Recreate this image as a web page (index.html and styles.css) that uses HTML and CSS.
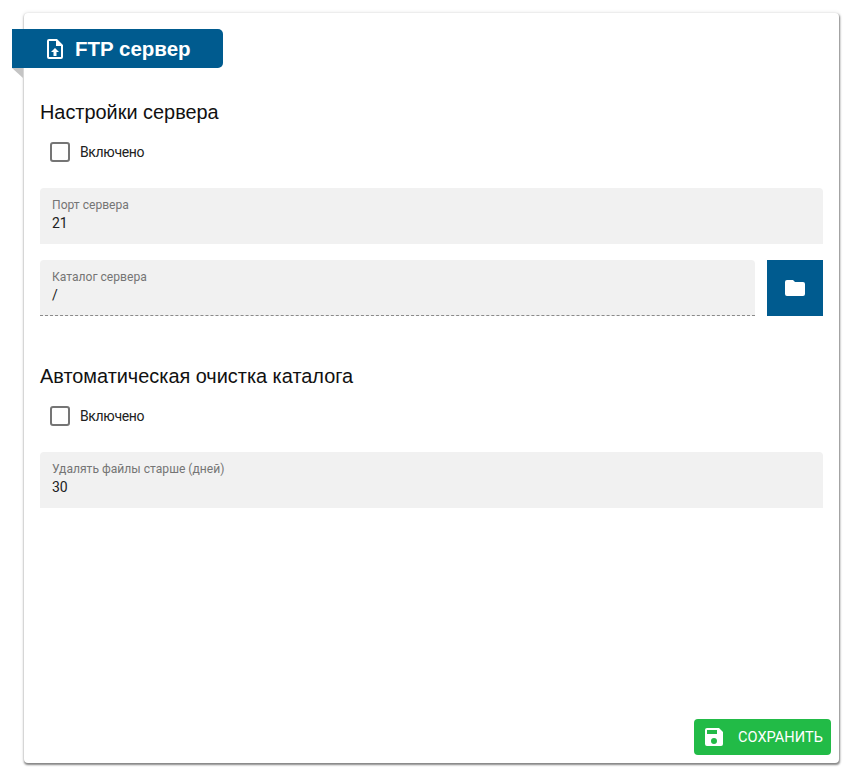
FILE: index.html
```html
<!DOCTYPE html>
<html lang="ru">
<head>
  <meta charset="UTF-8">
  <title>FTP сервер</title>
  <link rel="stylesheet" href="styles.css">
</head>
<body>
  <div class="card">
    <div class="tab">
      <svg class="tab-icon" viewBox="0 0 24 24" width="24" height="24">
        <path fill="#fff" fill-rule="evenodd" d="M14 2H6a2 2 0 0 0-2 2v16a2 2 0 0 0 2 2h12a2 2 0 0 0 2-2V8zm4 18H6V4h7v5h5z"/>
        <path fill="#fff" d="M8 15h2.5v4h3v-4H16l-4-4z"/>
      </svg>
      <span>FTP сервер</span>
    </div>

    <div class="content">
      <h2 class="section-title">Настройки сервера</h2>
      <label class="check"><span class="box"></span>Включено</label>
      <div class="field">
        <div class="field-label">Порт сервера</div>
        <div class="field-value">21</div>
      </div>
      <div class="field-row">
        <div class="field field-dashed">
          <div class="field-label">Каталог сервера</div>
          <div class="field-value">/</div>
        </div>
        <button class="folder-btn">
          <svg viewBox="0 0 24 24" width="24" height="24">
            <path fill="#fff" d="M10 4H4a2 2 0 0 0-2 2v12a2 2 0 0 0 2 2h16a2 2 0 0 0 2-2V8a2 2 0 0 0-2-2h-8z"/>
          </svg>
        </button>
      </div>

      <h2 class="section-title second">Автоматическая очистка каталога</h2>
      <label class="check"><span class="box"></span>Включено</label>
      <div class="field">
        <div class="field-label">Удалять файлы старше (дней)</div>
        <div class="field-value">30</div>
      </div>
    </div>

    <div class="actions">
      <button class="save-btn">
        <svg viewBox="0 0 24 24" width="24" height="24">
          <path fill="#fff" d="M17 3H5a2 2 0 0 0-2 2v14a2 2 0 0 0 2 2h14a2 2 0 0 0 2-2V7zm-5 16a3 3 0 1 1 0-6 3 3 0 0 1 0 6zm3-10H5V5h10z"/>
        </svg>
        <span>Сохранить</span>
      </button>
    </div>
  </div>
</body>
</html>
```

FILE: styles.css
```css
html, body {
  margin: 0;
  padding: 0;
}

body {
  box-sizing: border-box;
  min-height: 782px;
  padding: 13px 0 19px 24px;
  font-family: Roboto, sans-serif;
  background-color: #fff;
  color: #212121;
}

.card {
  position: relative;
  box-sizing: border-box;
  width: 815px;
  height: 750px;
  padding-top: 16px;
  display: flex;
  flex-direction: column;
  background-color: #fff;
  border-radius: 4px;
  box-shadow: 0.5px 1.5px 2px rgba(0, 0, 0, 0.45), 0 0 4px rgba(0, 0, 0, 0.12);
}

.tab {
  position: relative;
  box-sizing: border-box;
  width: 211px;
  height: 39px;
  margin-left: -12px;
  padding-left: 31px;
  display: flex;
  align-items: center;
  gap: 8px;
  background-color: #005b8f;
  border-radius: 0 5px 5px 0;
  color: #fff;
  font-family: "Liberation Sans", sans-serif;
  font-size: 20.5px;
  font-weight: bold;
}

/* folded corner under the tab */
.tab::after {
  content: "";
  position: absolute;
  left: 0;
  top: 39px;
  border-top: 10px solid #c4c4c4;
  border-left: 11px solid transparent;
}

.content {
  flex: 1;
  padding: 0 16px;
}

.section-title {
  margin: 32px 0 0;
  font-family: "Liberation Sans", sans-serif;
  font-size: 19.9px;
  line-height: 25px;
  font-weight: 400;
  color: #111;
}

.section-title.second {
  margin-top: 48px;
}

.check {
  display: flex;
  align-items: center;
  height: 20px;
  margin: 17px 0 26px 10px;
  font-size: 14px;
  letter-spacing: -0.35px;
  color: #212121;
}

.box {
  box-sizing: border-box;
  width: 20px;
  height: 20px;
  margin-right: 10px;
  border: 2px solid #757575;
  border-radius: 3px;
}

.field {
  box-sizing: border-box;
  height: 56px;
  padding: 10px 12px 0;
  background-color: #f1f1f1;
  border-radius: 4px 4px 0 0;
}

.field-label {
  font-size: 12.1px;
  line-height: 15px;
  color: #757575;
}

.field-value {
  margin-top: 1px;
  font-size: 14px;
  line-height: 18px;
  color: #212121;
}

.field-row {
  display: flex;
  gap: 12px;
  margin-top: 16px;
}

.field-row .field {
  flex: 1;
}

.field-dashed {
  border-bottom: 1px dashed #8a8a8a;
}

.folder-btn {
  width: 56px;
  height: 56px;
  padding: 0;
  display: flex;
  align-items: center;
  justify-content: center;
  background-color: #005b8f;
  border: none;
}

.actions {
  display: flex;
  justify-content: flex-end;
  padding: 0 8px 8px 0;
}

.save-btn {
  box-sizing: border-box;
  width: 137px;
  height: 36px;
  padding: 0 8px;
  display: flex;
  align-items: center;
  gap: 12px;
  background-color: #22bb47;
  border: none;
  border-radius: 4px;
  color: #fff;
  font-family: Roboto, sans-serif;
  font-size: 14.6px;
  text-transform: uppercase;
}
```
